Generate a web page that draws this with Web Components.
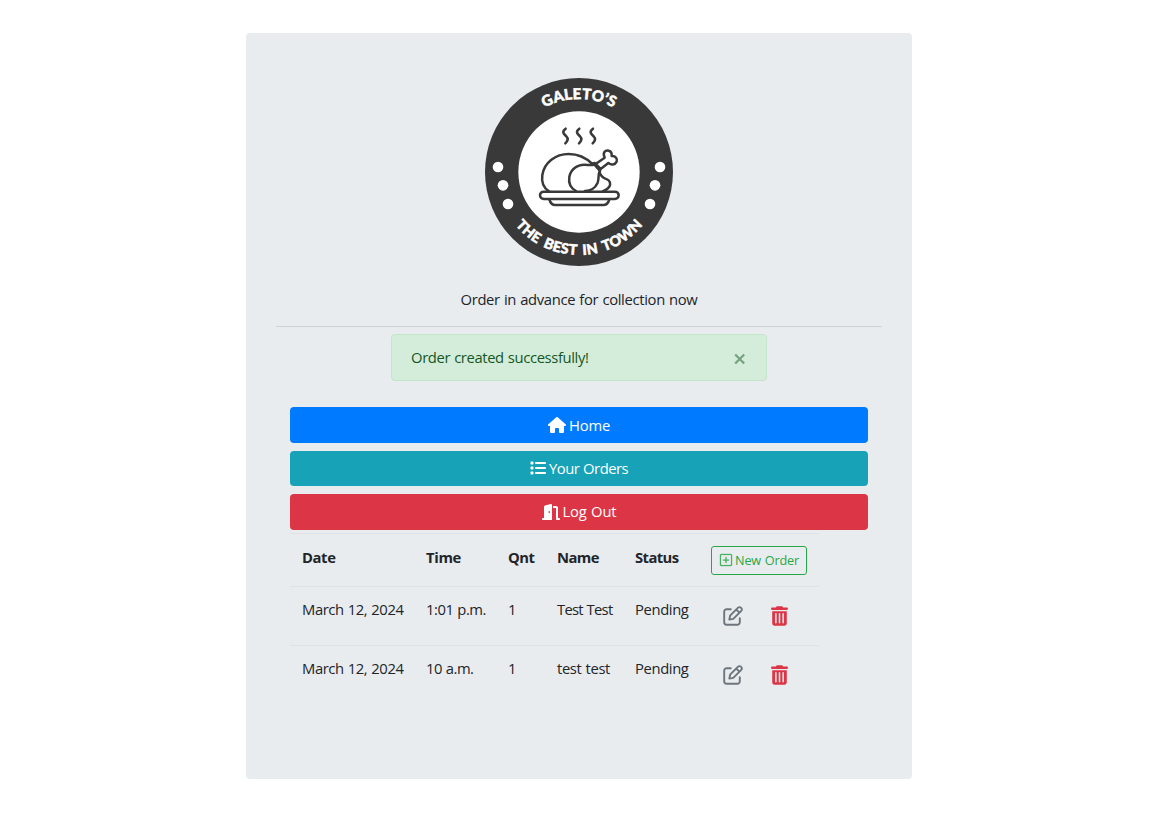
<!DOCTYPE html>
<html lang="en">
<head>
<meta charset="utf-8">
<title>Galeto's</title>
<style>
html,body{margin:0;background:#fff}
body{font:14.8px/22.5px "Open Sans","Noto Sans",sans-serif;font-stretch:95%;word-spacing:.6px;color:#212529;height:829px;overflow:hidden}
</style>
</head>
<body>
<order-page></order-page>
<script>
const make=(name,html,init)=>{
  const t=document.createElement('template');t.innerHTML=html;
  customElements.define(name,class extends HTMLElement{
    connectedCallback(){
      if(this.shadowRoot)return;
      this.attachShadow({mode:'open'}).append(t.content.cloneNode(true));
      if(init)init(this,this.shadowRoot);
    }
  });
};

/* Text tracked to a given width. */
make('fit-text',`<style>:host{display:inline-block;white-space:nowrap}</style><slot></slot>`,h=>{
  const target=+h.getAttribute('w'),n=h.textContent.length;
  const natural=h.getBoundingClientRect().width;
  h.style.letterSpacing=((target-natural)/n).toFixed(3)+'px';
});

const icons={
  home:['0 0 576 512','<path d="M575.8 255.500c0 18-15 32.100-32 32.100h-32l.7 160.200c0 2.700-.2 5.400-.5 8.100V472c0 22.100-17.900 40-40 40H392c-22.100 0-40-17.900-40-40v-88c0-17.700-14.300-32-32-32h-64c-17.700 0-32 14.300-32 32v88c0 22.100-17.900 40-40 40h-80c-22.100 0-40-17.900-40-40V287.600H32c-18 0-32-14-32-32.100 0-9 3-17 10-24L266.400 8c7-7 15-8 22-8s15 2 21 7l255.400 224.500c8 7 12 15 11 24z"/>'],
  list:['0 0 512 512','<path d="M40 48c-13.300 0-24 10.700-24 24v48c0 13.300 10.700 24 24 24h48c13.300 0 24-10.700 24-24V72c0-13.300-10.700-24-24-24zM192 64c-17.700 0-32 14.300-32 32s14.300 32 32 32h288c17.700 0 32-14.300 32-32s-14.300-32-32-32zM192 224c-17.700 0-32 14.300-32 32s14.300 32 32 32h288c17.700 0 32-14.300 32-32s-14.300-32-32-32zM192 384c-17.700 0-32 14.300-32 32s14.300 32 32 32h288c17.700 0 32-14.300 32-32s-14.300-32-32-32zM16 232v48c0 13.300 10.700 24 24 24h48c13.300 0 24-10.700 24-24v-48c0-13.300-10.700-24-24-24H40c-13.300 0-24 10.700-24 24zM40 368c-13.300 0-24 10.700-24 24v48c0 13.300 10.700 24 24 24h48c13.300 0 24-10.700 24-24v-48c0-13.300-10.700-24-24-24z"/>'],
  door:['0 0 576 512','<path d="M320 32c0-9.900-4.500-19.200-12.300-25.200S289.800-1.400 280.200 1l-179.900 45C79 51.300 64 70.500 64 92.500V448H32c-17.700 0-32 14.300-32 32s14.300 32 32 32h288zM256 256c0 17.700-10.700 32-24 32s-24-14.300-24-32 10.700-32 24-32 24 14.300 24 32zM352 128h96v352c0 17.700 14.300 32 32 32h64c17.700 0 32-14.300 32-32s-14.300-32-32-32h-32V128c0-35.300-28.700-64-64-64h-96z"/>'],
  plus:['0 0 16 16','<g stroke="currentColor" stroke-width=".4"><path d="M14 1a1 1 0 0 1 1 1v12a1 1 0 0 1-1 1H2a1 1 0 0 1-1-1V2a1 1 0 0 1 1-1zM2 0a2 2 0 0 0-2 2v12a2 2 0 0 0 2 2h12a2 2 0 0 0 2-2V2a2 2 0 0 0-2-2z"/><path d="M8 4a.5.5 0 0 1 .5.5v3h3a.5.5 0 0 1 0 1h-3v3a.5.5 0 0 1-1 0v-3h-3a.5.5 0 0 1 0-1h3v-3A.5.5 0 0 1 8 4"/></g>'],
  edit:['0 0 20 20','<g fill="none" stroke="currentColor" stroke-width="1.9" stroke-linejoin="round" stroke-linecap="round"><path d="M7.800 3.200H3.700A2.500 2.500 0 0 0 1.200 5.700v10.600a2.500 2.500 0 0 0 2.500 2.500h10.600a2.500 2.500 0 0 0 2.500-2.500v-4.100"/><path d="M6.300 13.600l.8-3.900 8-8a1.900 1.900 0 0 1 2.700 0l.5.5a1.900 1.900 0 0 1 0 2.700l-8 8zM13.300 3.600l3.100 3.100"/></g>'],
  trash:['0 0 448 512','<path fill-rule="evenodd" d="M135.200 17.700C140.600 6.800 151.700 0 163.800 0h120.400c12.100 0 23.200 6.800 28.600 17.700L320 32h96c17.700 0 32 14.300 32 32s-14.300 32-32 32H32C14.300 96 0 81.700 0 64s14.300-32 32-32h96zM32 128h384v320c0 35.300-28.700 64-64 64H96c-35.300 0-64-28.700-64-64zm96 48c-13 0-20 7.200-20 20v240c0 12 7.200 20 20 20s20-7.200 20-20V196c0-12-7.200-20-20-20zm96 0c-13 0-20 7.200-20 20v240c0 12 7.200 20 20 20s20-7.200 20-20V196c0-12-7.200-20-20-20zm96 0c-13 0-20 7.200-20 20v240c0 12 7.200 20 20 20s20-7.200 20-20V196c0-12-7.200-20-20-20z"/>']
};
make('ui-icon',`<style>:host{display:block;flex:none}svg{display:block;width:100%;height:100%;fill:currentColor;overflow:visible}</style><svg></svg>`,(h,r)=>{
  const [vb,p]=icons[h.getAttribute('name')],s=r.querySelector('svg');
  s.setAttribute('viewBox',vb);s.innerHTML=p;
  h.style.width=h.getAttribute('w')+'px';h.style.height=h.getAttribute('h')+'px';
});

make('brand-logo',`<style>:host{display:block;width:188px;height:188px}svg{display:block}text{font:900 45px Lato,sans-serif;fill:#fff;stroke:#fff;stroke-width:1.5px}</style>
<svg width="188" height="188" viewBox="15 24 564 564">
<defs><path id="top" d="M78 306a219 219 0 0 1 438 0"/><path id="bot" d="M48 306a249 249 0 0 0 498 0"/></defs>
<circle cx="297" cy="306" r="282" fill="#393939"/><circle cx="297" cy="306" r="182" fill="#fff"/>
<g fill="#fff"><circle cx="54" cy="291" r="16"/><circle cx="69" cy="346" r="16"/><circle cx="84" cy="402" r="16"/><circle cx="540" cy="291" r="16"/><circle cx="525" cy="346" r="16"/><circle cx="510" cy="402" r="16"/></g>
<text text-anchor="middle" textLength="216"><textPath href="#top" startOffset="50%" textLength="216">GALETO’S</textPath></text>
<text text-anchor="middle" style="font-size:43px;word-spacing:7px" textLength="436"><textPath href="#bot" startOffset="50%" textLength="436">THE BEST IN TOWN</textPath></text>
<g fill="none" stroke="#393939" stroke-width="7.500" stroke-linecap="round" stroke-linejoin="round">
<path d="M257 176c-14 10-4 17 2 23s5 13-3 21M298 176c-14 10-4 17 2 23s5 13-3 21M339 176c-14 10-4 17 2 23s5 13-3 21"/>
<path d="M207 364C188 352 184 335 187 315C193 277 227 252 266 252C295 252 319 264 337 282"/>
<path d="M288 363C272 354 265 339 268 321C272 299 291 284 313 284C325 284 333 288 343 283L360 303C353 311 358 325 353 338C346 354 330 363 315 363"/>
<path d="M336 281L344 279L361 296L359 306M348 281L374 263C367 248 375 240 386 242C394 244 396 250 395 258C407 257 413 267 410 275C405 285 394 286 385 279L362 297"/>
<path d="M359 308C363 319 370 325 381 328C390 331 393 342 388 350C384 357 377 361 368 364"/>
<rect x="180" y="365" width="236" height="22" rx="11"/>
<path d="M208 388C211 399 217 405 226 405H370C379 405 385 399 388 388"/>
</g></svg>`);

make('alert-box',`<style>:host{box-sizing:border-box;display:flex;justify-content:space-between;align-items:center;width:376px;height:47px;padding:0 20px 0 19px;border:1px solid #c3e6cb;border-radius:4px;background:#d4edda;color:#155724}svg{display:block;margin:4px 0 0 0}</style><slot></slot><svg width="12" height="12" viewBox="0 0 12 12"><path d="M1.200 1.500l9 9M10.200 1.500l-9 9" stroke="#76a181" stroke-width="2.200"/></svg>`);

make('nav-button',`<style>:host{box-sizing:border-box;display:flex;align-items:center;justify-content:center;height:36px;border-radius:4px;color:#fff;gap:3px}</style><slot name="icon"></slot><slot></slot>`,h=>{h.style.background=h.getAttribute('color')});

make('new-order-button',`<style>:host{box-sizing:border-box;display:flex;align-items:center;width:96px;height:29px;border:1px solid #28a745;border-radius:3px;color:#28a745;font-size:12.700px;padding-left:8px;gap:3px}</style><ui-icon name="plus" w="12" h="12"></ui-icon><fit-text w="64">New Order</fit-text>`);

make('order-row',`<style>:host{box-sizing:border-box;display:grid;grid-template-columns:124px 82px 49px 78px 76px 1fr;width:529px;height:59px;border-top:1px solid #dee2e6;padding:11px 0 0 12px}
:host([head]){height:53px;padding-top:12px;font-weight:700}:host([head]) ::slotted(new-order-button){font-weight:400}</style><slot></slot>`);

make('row-actions',`<style>:host{display:flex;gap:28px;padding:8px 0 0 12px;color:#6c757d;height:20px}.t{color:#dc3545}</style><ui-icon name="edit" w="20" h="20"></ui-icon><ui-icon class="t" name="trash" w="17" h="20"></ui-icon>`);

make('order-page',`<style>
:host{display:block;padding:33px 0 0 246px}
main{box-sizing:border-box;width:666px;height:746px;background:#e9ecef;border-radius:4px;display:flex;flex-direction:column;align-items:center;padding-top:45px}
.tag{margin-top:22px}
hr{width:606px;height:1px;border:0;margin:15px 0 7px;background:#ced2d5;flex:none}
nav{width:578px;margin-top:26px;display:flex;flex-direction:column;gap:8px}
nav-button.mid{height:35px}
nav-button.first{padding-top:1px}
section{width:578px;margin-top:3px}
</style>
<main><brand-logo></brand-logo><fit-text class="tag" w="237">Order in advance for collection now</fit-text><hr>
<alert-box><fit-text w="177.500">Order created successfully!</fit-text></alert-box>
<nav>
<nav-button class="first" color="#007bff"><ui-icon slot="icon" name="home" w="18" h="16"></ui-icon><fit-text w="41">Home</fit-text></nav-button>
<nav-button class="mid" color="#17a2b8"><ui-icon slot="icon" name="list" w="16" h="16"></ui-icon><fit-text w="79">Your Orders</fit-text></nav-button>
<nav-button color="#dc3545"><ui-icon slot="icon" name="door" w="18" h="16"></ui-icon><fit-text w="54">Log Out</fit-text></nav-button>
</nav>
<section>
<order-row head><div><fit-text w="33.500">Date</fit-text></div><div><fit-text w="35">Time</fit-text></div><div><fit-text w="26.500">Qnt</fit-text></div><div><fit-text w="42">Name</fit-text></div><div><fit-text w="43.500">Status</fit-text></div><new-order-button></new-order-button></order-row>
<order-row><div><fit-text w="101.500">March 12, 2024</fit-text></div><div><fit-text w="60">1:01 p.m.</fit-text></div><div>1</div><div><fit-text w="55.500">Test Test</fit-text></div><div><fit-text w="53.500">Pending</fit-text></div><row-actions></row-actions></order-row>
<order-row><div><fit-text w="101.500">March 12, 2024</fit-text></div><div><fit-text w="47.500">10 a.m.</fit-text></div><div>1</div><div><fit-text w="53">test test</fit-text></div><div><fit-text w="53.500">Pending</fit-text></div><row-actions></row-actions></order-row>
</section></main>`);
</script>
</body>
</html>
